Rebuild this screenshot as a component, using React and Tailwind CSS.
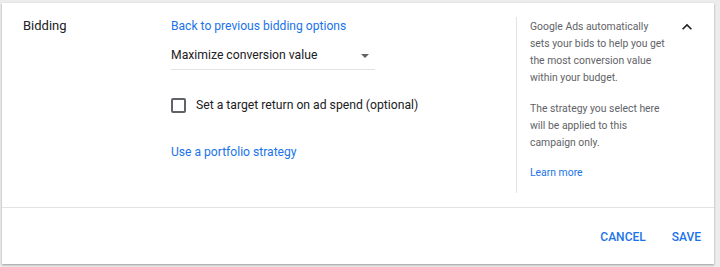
export default function App() {
  return (
    <div
      className="w-[720px] h-[267px] bg-[#ececec] pt-[3px] pl-[2px] pr-[6px] pb-[3px]"
      style={{ fontFamily: "Roboto, 'Noto Sans', sans-serif" }}
    >
      <div className="h-full bg-white shadow-[0_1px_2px_rgba(0,0,0,0.35)] flex flex-col">
        <div className="flex h-[204px] pl-[21px]">
          <div className="w-[148px] pt-[15px] text-[13px] leading-[16px] text-[#202124]">Bidding</div>
          <div className="w-[345px] pt-[15px] flex flex-col items-start">
            <div className="text-[12.1px] leading-[16px] text-[#1a73e8]">Back to previous bidding options</div>
            <div className="mt-[8px] w-[204px] h-[28px] border-b border-[#e3e3e3] flex items-center justify-between pr-[6px]">
              <span className="text-[12.2px] text-[#202124]">Maximize conversion value</span>
              <svg width="8" height="4" viewBox="0 0 8 4">
                <path d="M0 0 L8 0 L4 4 Z" fill="#5f6368" />
              </svg>
            </div>
            <div className="mt-[25px] h-[20px] flex items-center">
              <div className="w-[15px] h-[15px] border-2 border-[#5f6368] rounded-[2px]" />
              <span className="ml-[10px] text-[12.2px] text-[#202124]">Set a target return on ad spend (optional)</span>
            </div>
            <div className="mt-[29px] text-[12.1px] leading-[16px] text-[#1a73e8]">Use a portfolio strategy</div>
          </div>
          <div className="w-[161px] mt-[14px] h-[176px] border-l border-[#e3e3e3] pl-[13px] pt-[1px] text-[10.4px] leading-[17px] text-[#5f6368]">
            <div className="w-[137px]">
              <p>Google Ads automatically sets your bids to help you get the most conversion value within your budget.</p>
              <p className="mt-[14px]">The strategy you select here will be applied to this campaign only.</p>
              <p className="mt-[13px] text-[#1a73e8]">Learn more</p>
            </div>
          </div>
          <div className="w-[20px] pt-[14px]">
            <svg width="20" height="20" viewBox="0 0 24 24">
              <path d="M12 8l-6 6 1.41 1.41L12 10.83l4.59 4.58L18 14z" fill="#202124" />
            </svg>
          </div>
        </div>
        <div className="flex-1 border-t border-[#e3e3e3] flex items-center justify-end pr-[13px] gap-[26px] pt-[1px] text-[12px] font-medium text-[#1a73e8]">
          <span>CANCEL</span>
          <span>SAVE</span>
        </div>
      </div>
    </div>
  );
}
